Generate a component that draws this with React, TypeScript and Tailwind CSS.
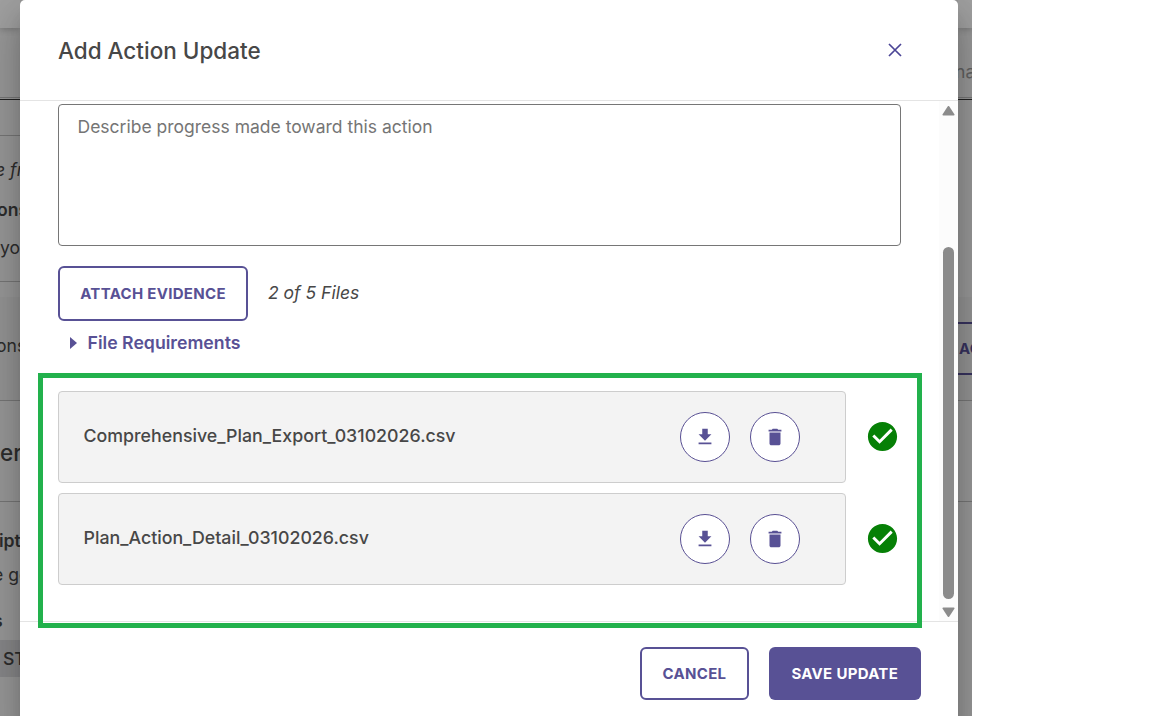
import type { ReactNode } from "react";

const files = [
  "Comprehensive_Plan_Export_03102026.csv",
  "Plan_Action_Detail_03102026.csv",
];

function IconButton({ label, children }: { label: string; children: ReactNode }) {
  return (
    <button
      aria-label={label}
      className="flex size-[50px] items-center justify-center rounded-full border border-[#584f93] bg-white text-[#585195]"
    >
      <svg viewBox="0 0 24 24" className="mb-px size-[22px]" fill="currentColor">
        {children}
      </svg>
    </button>
  );
}

function FileRow({ name }: { name: string }) {
  return (
    <div className="flex items-center">
      <div className="flex h-[92px] w-[788px] items-center rounded-[4px] border border-[#cdcdcd] bg-[#f3f3f3] pr-[45px] pl-[24.5px]">
        <span className="flex-1 pb-0.5 text-[17.8px] font-medium">{name}</span>
        <div className="flex gap-5">
          <IconButton label="Download">
            <path d="M19 9h-4V3H9v6H5l7 7 7-7zM5 18v2h14v-2H5z" />
          </IconButton>
          <IconButton label="Delete">
            <path d="M6 19c0 1.1.9 2 2 2h8c1.1 0 2-.9 2-2V7H6v12zM19 4h-3.5l-1-1h-5l-1 1H5v2h14V4z" />
          </IconButton>
        </div>
      </div>
      <svg viewBox="0 0 24 24" className="mb-px ml-[19px] size-[35px] fill-[#068006]">
        <path d="M12 2C6.48 2 2 6.48 2 12s4.48 10 10 10 10-4.48 10-10S17.52 2 12 2zm-2 15l-5-5 1.41-1.41L10 14.17l7.59-7.59L19 8l-9 9z" />
      </svg>
    </div>
  );
}

// Slice of the dimmed page left of the dialog
function PageLeft() {
  return (
    <div className="flex w-[20px] flex-col overflow-hidden whitespace-nowrap text-[17.6px] text-[#2d2d2d]">
      <div className="h-[28px] shrink-0 bg-[#a1a1a1] shadow-[0_2px_6px_rgba(0,0,0,0.2)]" />
      <div className="h-[70px] shrink-0 border-b border-[#777777]" />
      <div className="mt-px h-px shrink-0 bg-[#222222]" />
      <div className="h-[36px] shrink-0 border-b border-[#777777]" />
      <div className="h-[146px] shrink-0 border-b border-[#777777] pt-[14px]">
        <p className="-ml-[5px] h-10 leading-10 italic">e from</p>
        <p className="-ml-[3px] h-10 leading-10 font-semibold">ons</p>
        <p className="h-9 leading-9">your</p>
      </div>
      <div className="h-[15px] shrink-0" />
      <div className="h-[104px] shrink-0 border-b border-[#777777] bg-[#959595] pt-[29px]">
        <p className="-ml-[4px] h-10 leading-10">ons</p>
      </div>
      <div className="h-[101px] shrink-0 border-b border-[#777777] pt-8">
        <p className="h-10 text-[22.5px] leading-10 font-medium">ers</p>
      </div>
      <div className="h-[138px] shrink-0 pt-[21px]">
        <p className="-ml-px h-[36px] leading-[36px] font-semibold">iption</p>
        <p className="-ml-[7px] h-[34px] leading-[31px]">e goal</p>
        <p className="-ml-[7px] h-[47px] leading-[56px] font-semibold">s</p>
      </div>
      <div className="h-[37px] shrink-0 bg-[#88888a] pl-[3px] leading-[37px] font-medium">STATUS</div>
      <div className="flex-1" />
    </div>
  );
}

function PageRight() {
  return (
    <div className="flex w-[14px] flex-col overflow-hidden whitespace-nowrap">
      <div className="h-[28px] shrink-0 bg-[#a1a1a1] shadow-[0_2px_6px_rgba(0,0,0,0.2)]" />
      <div className="h-[70px] shrink-0 border-b border-[#777777] pt-6">
        <p className="-ml-[3px] text-[17.6px] leading-10 text-[#626262]">nav</p>
      </div>
      <div className="mt-px h-px shrink-0 bg-[#222222]" />
      <div className="h-[197px] shrink-0" />
      <div className="h-[104px] shrink-0 border-b border-[#777777] bg-[#959595] pt-[25px]">
        <div className="h-[53px] border-y-2 border-[#38335f] pl-px text-[15px] leading-[50px] font-bold tracking-[0.3px] text-[#38335f]">
          ACTION
        </div>
      </div>
      <div className="h-[101px] shrink-0 border-b border-[#777777]" />
      <div className="flex-1" />
    </div>
  );
}

function Scrollbar() {
  return (
    <div className="flex w-[19px] flex-col items-center bg-[#fcfcfc] pt-[5px] pb-[4px]">
      <svg viewBox="0 0 13 10" className="h-[10px] w-[13px] fill-[#8b8b8b]">
        <path d="M5.5.7a1.2 1.2 0 0 1 2 0l4.9 7.6c.4.7 0 1.3-.8 1.3H1.4C.6 9.6.2 9 .6 8.3z" />
      </svg>
      <div className="mt-[131px] w-[11px] flex-1 rounded-full bg-[#8b8b8b]" />
      <svg viewBox="0 0 13 10" className="mt-[8px] h-[10px] w-[13px] rotate-180 fill-[#8b8b8b]">
        <path d="M5.5.7a1.2 1.2 0 0 1 2 0l4.9 7.6c.4.7 0 1.3-.8 1.3H1.4C.6 9.6.2 9 .6 8.3z" />
      </svg>
    </div>
  );
}

function Dialog() {
  return (
    <div
      role="dialog"
      className="relative flex h-[740px] w-[938px] shrink-0 flex-col rounded-[5px] bg-white shadow-[0_11px_15px_-7px_rgba(0,0,0,0.2),0_24px_38px_3px_rgba(0,0,0,0.14),0_9px_46px_8px_rgba(0,0,0,0.12)]"
    >
      <header className="flex h-[101px] shrink-0 items-center justify-between border-b border-[#e4e4e4] pr-[56px] pl-[38px]">
        <h2 className="pt-0.5 text-[22.5px] font-medium">Add Action Update</h2>
        <button aria-label="Close" className="text-[#4b4596]">
          <svg viewBox="0 0 14 14" className="size-[14px]" fill="none" stroke="currentColor" strokeWidth="1.7">
            <path d="M1 1l12 12M13 1L1 13" />
          </svg>
        </button>
      </header>

      <div className="flex h-[520px] shrink-0">
        <div className="flex-1 pt-[3px] pl-[38px]">
          <textarea
            placeholder="Describe progress made toward this action"
            className="block h-[142px] w-[843px] resize-none rounded-[4px] border border-[#767676] px-[18.5px] py-[9px] text-[17.5px] leading-[26px] placeholder:text-[#757575]"
          />
          <div className="mt-5 flex items-center gap-5">
            <button className="h-[55px] w-[190px] rounded-[6px] border-2 border-[#585195] pt-px text-[15px] font-bold tracking-[0.3px] text-[#585195]">
              ATTACH EVIDENCE
            </button>
            <span className="text-[17.5px] italic">2 of 5 Files</span>
          </div>
          <div className="mt-[9px] flex h-[26px] items-center pl-[12px] text-[17.7px] font-semibold text-[#585195]">
            <svg viewBox="0 0 7 12" className="mr-[10.5px] mb-px h-[12px] w-[7px]" fill="currentColor">
              <path d="M0 0l7 6-7 6z" />
            </svg>
            File Requirements
          </div>
          <div className="mt-[35px] flex flex-col gap-[10px]">
            {files.map((name) => (
              <FileRow key={name} name={name} />
            ))}
          </div>
        </div>
        <Scrollbar />
      </div>

      <footer className="flex flex-1 items-start justify-end gap-5 border-t border-[#e4e4e4] pt-[25px] pr-[37.5px]">
        <button className="h-[53px] w-[109px] rounded-[6px] border-2 border-[#585195] pt-px text-[15px] font-bold tracking-[0.3px] text-[#585195]">
          CANCEL
        </button>
        <button className="h-[53px] w-[151.5px] rounded-[6px] bg-[#585195] pt-px text-[15px] font-bold tracking-[0.3px] text-white">
          SAVE UPDATE
        </button>
      </footer>

      {/* highlight around the attached files */}
      <div className="pointer-events-none absolute top-[373px] left-[18px] h-[255px] w-[884px] border-5 border-[#22b14c]" />
    </div>
  );
}

export default function App() {
  return (
    <div className="h-[716px] overflow-hidden bg-white font-['Inter',sans-serif] text-[#474747]">
      <div className="flex h-[716px] w-[972px] overflow-hidden bg-[#999999]">
        <PageLeft />
        <Dialog />
        <PageRight />
      </div>
    </div>
  );
}
